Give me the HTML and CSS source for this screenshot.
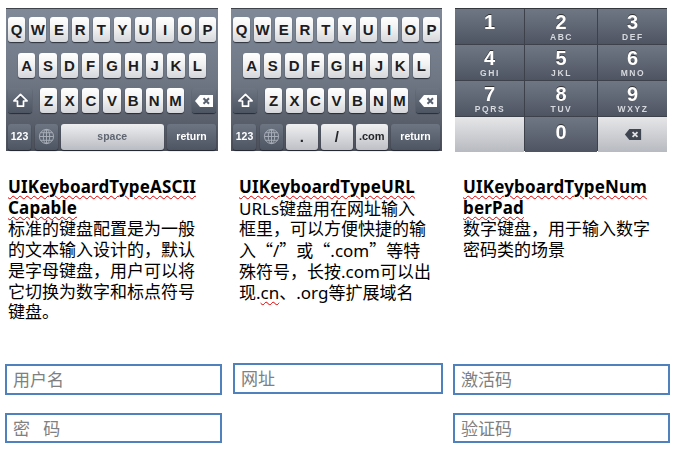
FILE: index.html
```html
<!DOCTYPE html>
<html lang="zh">
<head>
<meta charset="utf-8">
<title>Keyboard types</title>
<link rel="stylesheet" href="styles.css">
</head>
<body>
<svg class="defs" width="0" height="0" aria-hidden="true">
  <symbol id="shift" viewBox="0 0 16 16"><path d="M8 1.5 15 8.5H11.2V14H4.8V8.5H1Z" fill="#4b5361" stroke="#fff" stroke-width="1.8" stroke-linejoin="round"/></symbol>
  <symbol id="del" viewBox="0 0 20 14"><path d="M6 1H19V13H6L1 7Z" fill="#fff"/><path d="M9.5 4.3 15 9.7M15 4.3 9.5 9.7" stroke="#5a626f" stroke-width="2"/></symbol>
  <symbol id="delnum" viewBox="0 0 20 14"><path d="M6 1H19V13H6L1 7Z" fill="#3f4652"/><path d="M9.5 4.3 15 9.7M15 4.3 9.5 9.7" stroke="#dfe0e3" stroke-width="2"/></symbol>
  <symbol id="globe" viewBox="0 0 18 18"><g fill="none" stroke="#aab0ba" stroke-width="1"><circle cx="9" cy="9" r="7.5"/><ellipse cx="9" cy="9" rx="3.4" ry="7.5"/><path d="M9 1.5V16.5M1.5 9H16.5M2.6 5H15.4M2.6 13H15.4"/></g></symbol>
</svg>
<main class="page">
  <section class="top">
    <article class="col">
      <div class="kbd">
        <div class="row"><span class="key">Q</span><span class="key">W</span><span class="key">E</span><span class="key">R</span><span class="key">T</span><span class="key">Y</span><span class="key">U</span><span class="key">I</span><span class="key">O</span><span class="key">P</span></div>
        <div class="row row-mid"><span class="key">A</span><span class="key">S</span><span class="key">D</span><span class="key">F</span><span class="key">G</span><span class="key">H</span><span class="key">J</span><span class="key">K</span><span class="key">L</span></div>
        <div class="row row-shift"><span class="key dark side"><svg class="ic-shift"><use href="#shift"/></svg></span><div class="letters"><span class="key">Z</span><span class="key">X</span><span class="key">C</span><span class="key">V</span><span class="key">B</span><span class="key">N</span><span class="key">M</span></div><span class="key dark side"><svg class="ic-del"><use href="#del"/></svg></span></div>
        <div class="row row-bottom"><span class="key dark small w-num">123</span><span class="key dark w-num"><svg class="ic-globe"><use href="#globe"/></svg></span><span class="key light-grey grow">space</span><span class="key dark small w-ret">return</span></div>
      </div>
      <div class="copy copy-a">
        <h2 class="title"><span class="typo">UIKeyboardTypeASCII</span><br><span class="typo">Capable</span></h2>
        <p class="desc">标准的键盘配置是为一般的文本输入设计的，默认是字母键盘，用户可以将它切换为数字和标点符号键盘。</p>
      </div>
    </article>
    <article class="col">
      <div class="kbd">
        <div class="row"><span class="key">Q</span><span class="key">W</span><span class="key">E</span><span class="key">R</span><span class="key">T</span><span class="key">Y</span><span class="key">U</span><span class="key">I</span><span class="key">O</span><span class="key">P</span></div>
        <div class="row row-mid"><span class="key">A</span><span class="key">S</span><span class="key">D</span><span class="key">F</span><span class="key">G</span><span class="key">H</span><span class="key">J</span><span class="key">K</span><span class="key">L</span></div>
        <div class="row row-shift"><span class="key dark side"><svg class="ic-shift"><use href="#shift"/></svg></span><div class="letters"><span class="key">Z</span><span class="key">X</span><span class="key">C</span><span class="key">V</span><span class="key">B</span><span class="key">N</span><span class="key">M</span></div><span class="key dark side"><svg class="ic-del"><use href="#del"/></svg></span></div>
        <div class="row row-bottom"><span class="key dark small w-num">123</span><span class="key dark w-num"><svg class="ic-globe"><use href="#globe"/></svg></span><span class="key sym grow">.</span><span class="key sym grow">/</span><span class="key sym dotcom grow">.com</span><span class="key dark small w-ret">return</span></div>
      </div>
      <div class="copy copy-b">
        <h2 class="title"><span class="typo">UIKeyboardTypeURL</span></h2>
        <p class="desc">URLs键盘用在网址输入<br>框里，可以方便快捷的输入<span class="q">“</span>/<span class="q">”</span>或<span class="q">“</span>.com<span class="q">”</span>等特殊符号，长按.com可以出现.<span class="typo-thin">cn</span>、.org等扩展域名</p>
      </div>
    </article>
    <article class="col">
      <div class="numpad">
        <div class="nkey"><b>1</b></div>
        <div class="nkey"><b>2</b><i>ABC</i></div>
        <div class="nkey"><b>3</b><i>DEF</i></div>
        <div class="nkey"><b>4</b><i>GHI</i></div>
        <div class="nkey"><b>5</b><i>JKL</i></div>
        <div class="nkey"><b>6</b><i>MNO</i></div>
        <div class="nkey"><b>7</b><i>PQRS</i></div>
        <div class="nkey"><b>8</b><i>TUV</i></div>
        <div class="nkey"><b>9</b><i>WXYZ</i></div>
        <div class="nkey blank"></div>
        <div class="nkey nkey-zero"><b>0</b></div>
        <div class="nkey blank"><svg class="ic-delnum"><use href="#delnum"/></svg></div>
      </div>
      <div class="copy copy-c">
        <h2 class="title"><span class="typo">UIKeyboardTypeNum</span><br><span class="typo">berPad</span></h2>
        <p class="desc">数字键盘，用于输入数字密码类的场景</p>
      </div>
    </article>
  </section>
  <section class="forms">
    <div class="fcol fcol-wide">
      <div class="field">用户名</div>
      <div class="field field-short">密&nbsp;&nbsp;&nbsp;码</div>
    </div>
    <div class="fcol fcol-mid">
      <div class="field">网址</div>
    </div>
    <div class="fcol fcol-wide">
      <div class="field">激活码</div>
      <div class="field field-short">验证码</div>
    </div>
  </section>
</main>
</body>
</html>
```

FILE: styles.css
```css
* { box-sizing: border-box; }
html, body { margin: 0; padding: 0; background: #fff; }
body { width: 676px; height: 462px; overflow: hidden; font-family: "Noto Sans", "Noto Sans CJK SC", sans-serif; color: #000; }
.defs { position: absolute; }
.page { padding: 8px 0 0 6px; }

.top { display: grid; grid-template-columns: 212px 211px 212px; column-gap: 13px; height: 356px; }
.col { min-width: 0; }

.kbd {
  height: 143px; padding: 8px 2px 0; display: flex; flex-direction: column; gap: 10.5px;
  background: linear-gradient(#7f8997 0%, #6f7785 50%, #4a4f59 100%);
  border-top: 1px solid #3f444c; filter: blur(.35px);
}
.row { display: flex; gap: 4px; height: 25px; }
.row-mid { padding: 0 10px; }
.row-shift { gap: 8px; }
.letters { display: flex; flex: 1; gap: 4px; }
.row-bottom { gap: 3.5px; height: 26px; }
.key {
  flex: 1 1 0; min-width: 0; display: flex; align-items: center; justify-content: center;
  border-radius: 3px; background: linear-gradient(#fff 0%, #f2f2f3 45%, #d5d6da 100%);
  box-shadow: 0 1px 1px rgba(20,24,32,.75);
  font: bold 15px/1 "Liberation Sans", sans-serif; color: #1d1d1f;
}
.dark { background: linear-gradient(#6d7583 0%, #4d5462 100%); color: #fff; }
.side { flex: 0 0 24px; }
.small { font-size: 10.5px; }
.w-num { flex: 0 0 23px; }
.w-ret { flex: 0 0 49px; }
.grow { flex: 1 1 0; }
.light-grey { background: linear-gradient(#eeeef0, #b9bcc3); color: #5f6671; font-size: 10.5px; }
.sym { background: linear-gradient(#f0f0f2, #bec0c6); color: #24262a; font-size: 15px; }
.dotcom { font-size: 11px; }
.ic-shift { width: 15px; height: 15px; }
.ic-del { width: 20px; height: 14px; }
.ic-globe { width: 17px; height: 17px; }
.ic-delnum { width: 18px; height: 13px; }

.numpad {
  height: 143px; display: grid; grid-template-columns: 69px 72px 69px; grid-template-rows: repeat(4, 35px);
  gap: 1px; background: #3d4149; border-top: 1px solid #33373e; filter: blur(.35px);
}
.nkey {
  display: flex; flex-direction: column; align-items: center; justify-content: flex-start;
  background: linear-gradient(#6f7785 0%, #4e5462 100%); color: #fff;
  font-family: "Liberation Sans", sans-serif; padding-top: 4px;
}
.nkey-zero { padding-top: 6px; }
.nkey b { font-size: 20px; line-height: 19px; text-shadow: 0 -1px 0 #333; }
.nkey i { font-style: normal; font-weight: bold; font-size: 8.5px; line-height: 10px; letter-spacing: 1.6px; color: #d6d9de; padding-left: 1px; }
.blank { background: linear-gradient(#e6e6e8, #b7bac0); justify-content: center; padding-top: 0; }

.copy { width: 190px; }
.copy-a { margin: 26px 0 0 2px; }
.copy-b { margin: 26px 0 0 8px; width: 196px; }
.copy-c { margin: 26px 0 0 8px; }
.title, .desc { margin: 0; font-size: 17px; line-height: 20.7px; }
.title { font-weight: 700; letter-spacing: .15px; padding-bottom: 1px; }
.q { font-family: "Noto Sans CJK SC", sans-serif; }
.typo { text-decoration: underline wavy #e00000 1px; text-underline-offset: 2px; }
.typo-thin { text-decoration: underline wavy #e00000 1px; text-underline-offset: 2px; }

.forms { display: flex; padding-left: 0; margin-left: -1px; }
.fcol { display: flex; flex-direction: column; }
.fcol-wide { width: 217px; }
.fcol-mid { width: 210px; margin: -1px 10px 0 11px; }
.field {
  height: 31px; border: 2px solid #4f81bd; padding-left: 6px;
  display: flex; align-items: center; font-size: 17px; line-height: 1; color: #808080; background: #fff;
}
.field-short { height: 30px; margin-top: 18px; }
```
